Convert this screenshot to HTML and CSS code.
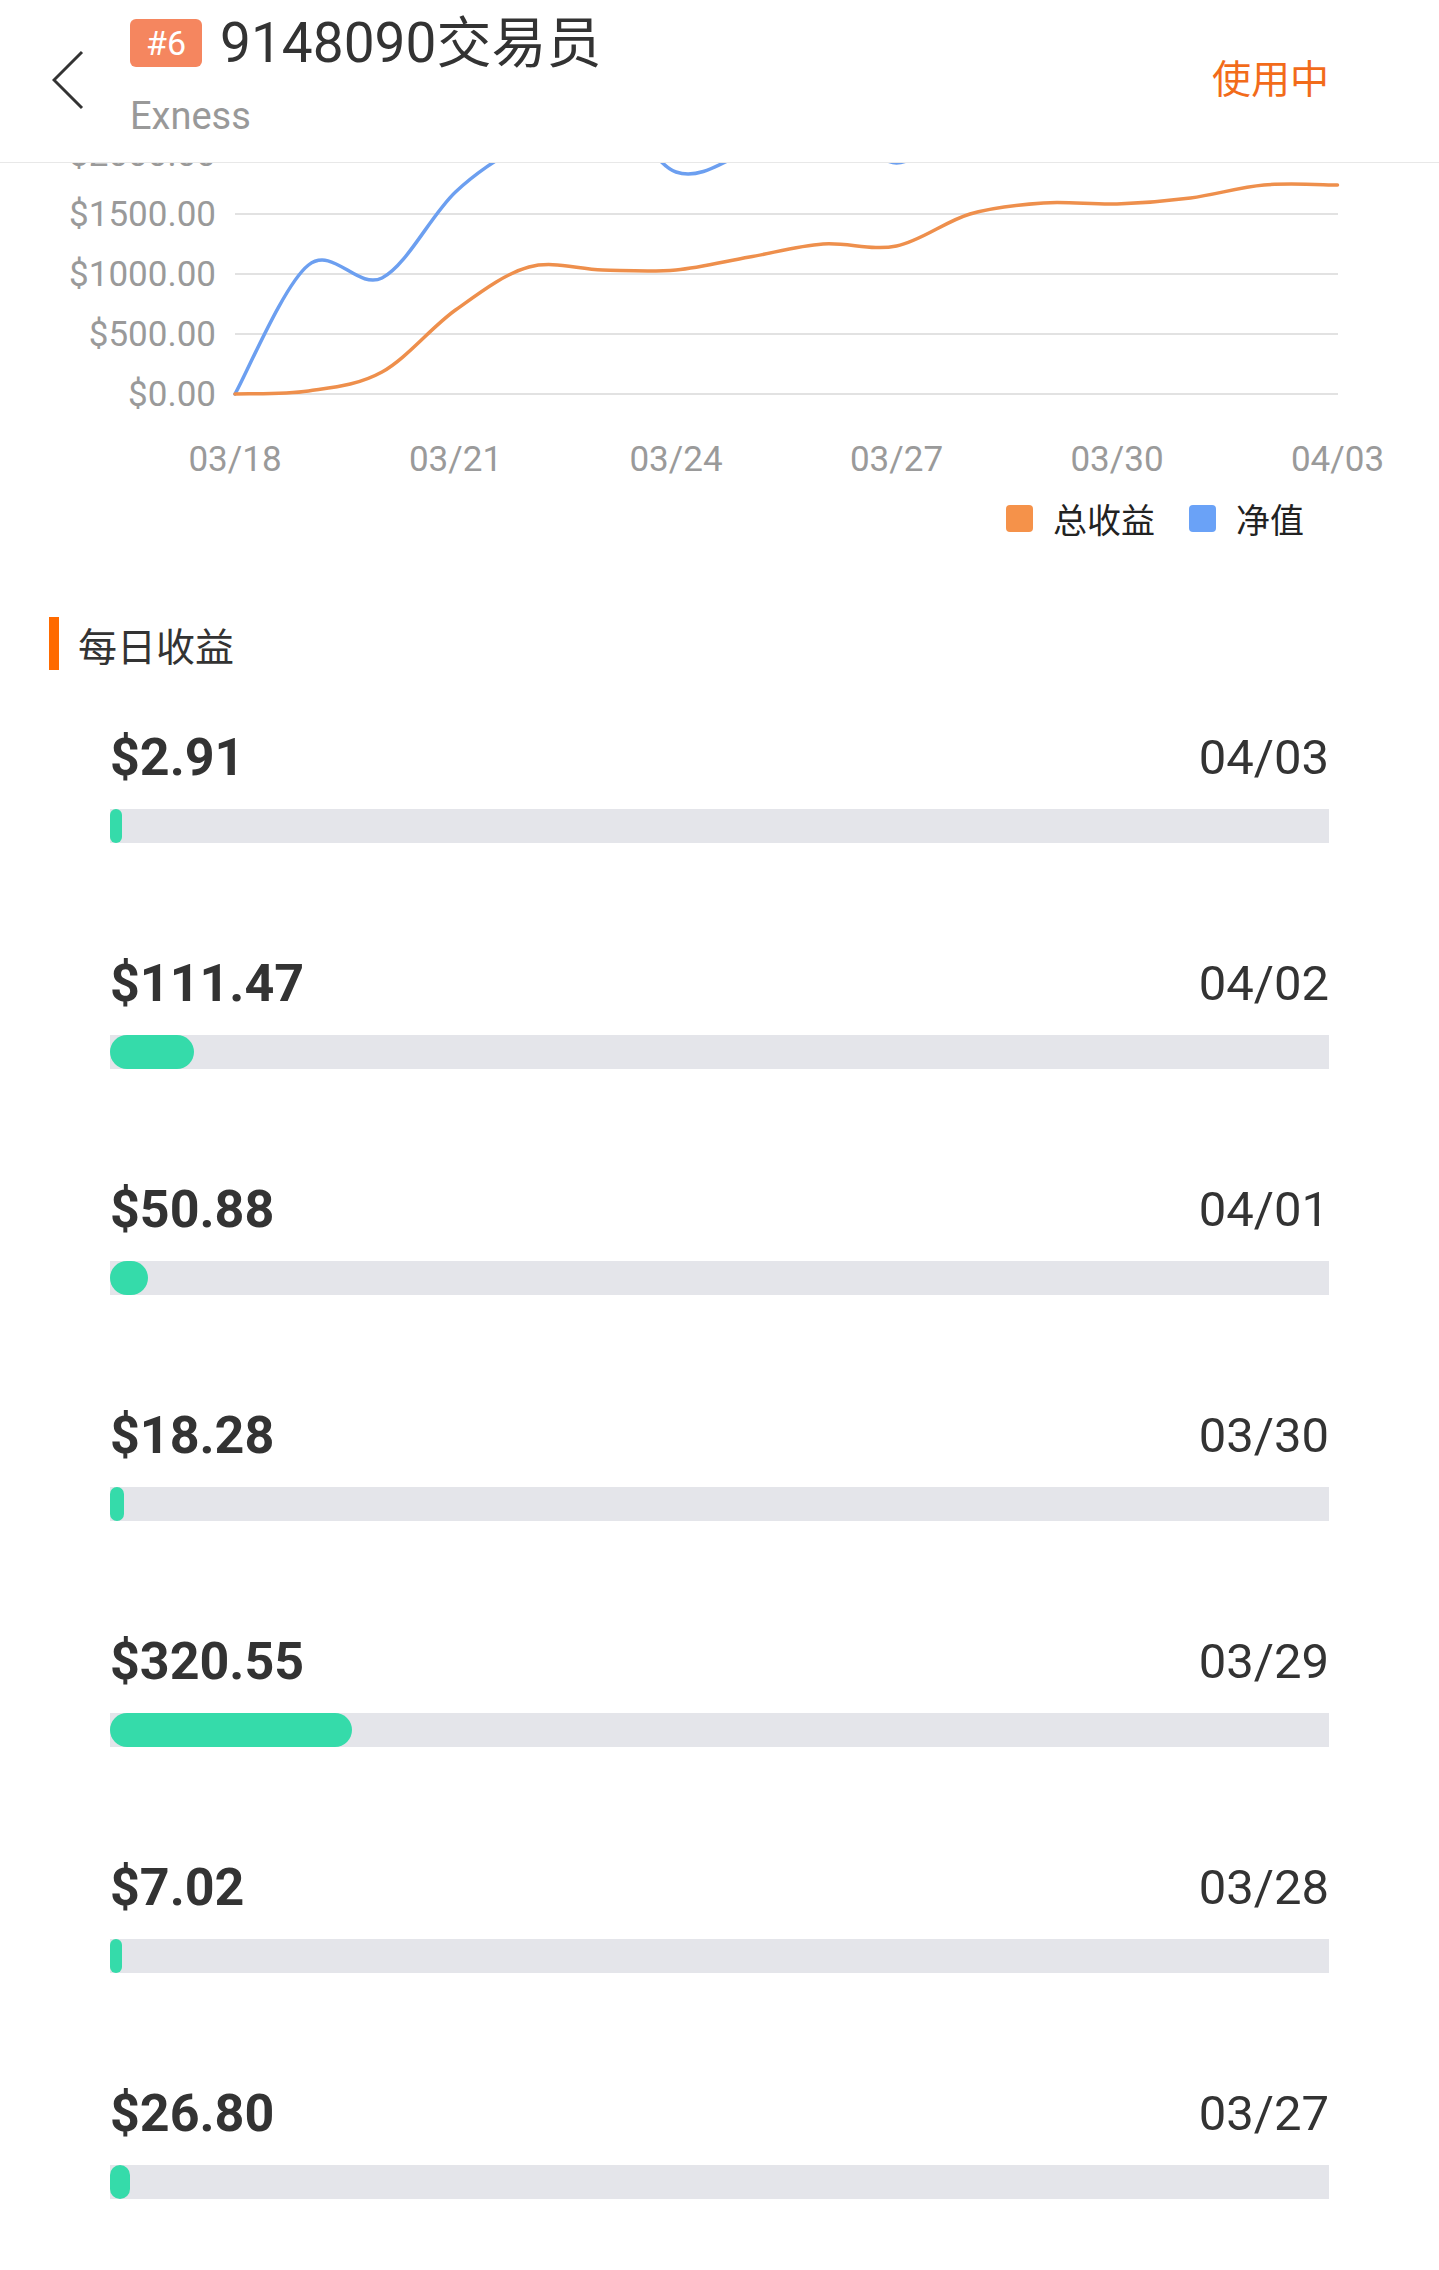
FILE: index.html
```html
<!DOCTYPE html>
<html lang="zh-CN">
<head>
    <meta charset="UTF-8">
    <meta name="viewport" content="width=device-width, initial-scale=1.0">
    <title>9148090交易员</title>
    <link rel="stylesheet" href="styles.css">
</head>
<body>
    <header class="top-bar">
        <a class="back" href="#">
            <svg width="32" height="60" viewBox="0 0 32 60"><polyline points="30,2 2,30 30,58" fill="none" stroke="#333" stroke-width="3"/></svg>
        </a>
        <div class="info">
            <div class="title-row">
                <span class="rank">#6</span>
                <span class="name">9148090交易员</span>
            </div>
            <div class="broker">Exness</div>
        </div>
        <span class="status">使用中</span>
    </header>

    <section class="chart">
        <svg class="chart-svg" width="1439" height="327" viewBox="0 163 1439 327">
            <g class="grid">
                <line x1="235" y1="154" x2="1338" y2="154"/>
                <line x1="235" y1="214" x2="1338" y2="214"/>
                <line x1="235" y1="274" x2="1338" y2="274"/>
                <line x1="235" y1="334" x2="1338" y2="334"/>
                <line x1="235" y1="394" x2="1338" y2="394"/>
            </g>
            <g class="y-labels">
                <text x="216" y="166">$2000.00</text>
                <text x="216" y="226">$1500.00</text>
                <text x="216" y="286">$1000.00</text>
                <text x="216" y="346">$500.00</text>
                <text x="216" y="406">$0.00</text>
            </g>
            <g class="x-labels">
                <text x="235" y="471">03/18</text>
                <text x="455.5" y="471">03/21</text>
                <text x="676" y="471">03/24</text>
                <text x="896.5" y="471">03/27</text>
                <text x="1117" y="471">03/30</text>
                <text x="1337.5" y="471">04/03</text>
            </g>
            <!-- 净值 -->
            <path class="line-blue" d="M235,394 C247.25,372.5 284,284.33 308.5,265 S357.5,290.17 382,278 S431,215 455.5,192 S504.5,155.33 529,140 S578,94.67 602.5,100 S651.5,163.67 676,172 S725,160.33 749.5,150 S798.5,107.83 823,110 S872,163 896.5,163 S945.5,122.17 970,110 S1019,93.33 1043.5,90 S1092.5,90 1117,90 S1166,90 1190.5,90 S1239.5,90 1264,90 S1325.25,90 1337.5,90"/>
            <!-- 总收益 -->
            <path class="line-orange" d="M235,394 C247.25,393.5 284,394.67 308.5,391 S357.5,385.5 382,372 S431,327.5 455.5,310 S504.5,273.67 529,267 S578,269.5 602.5,270 S651.5,272.17 676,270 S725,261.33 749.5,257 S798.5,245.83 823,244 S872,251 896.5,246 S945.5,221.17 970,214 S1019,204.67 1043.5,203 S1092.5,204.83 1117,204 S1166,201.17 1190.5,198 S1239.5,187.17 1264,185 S1325.25,185 1337.5,185"/>
        </svg>
        <div class="legend">
            <span class="legend-item"><i class="swatch orange"></i>总收益</span>
            <span class="legend-item"><i class="swatch blue"></i>净值</span>
        </div>
    </section>

    <section class="daily">
        <h2 class="section-title">每日收益</h2>
        <ul class="day-list">
            <li class="day">
                <div class="day-head"><span class="amount">$2.91</span><span class="date">04/03</span></div>
                <div class="track"><div class="fill" style="width: 0.18%"></div></div>
            </li>
            <li class="day">
                <div class="day-head"><span class="amount">$111.47</span><span class="date">04/02</span></div>
                <div class="track"><div class="fill" style="width: 6.89%"></div></div>
            </li>
            <li class="day">
                <div class="day-head"><span class="amount">$50.88</span><span class="date">04/01</span></div>
                <div class="track"><div class="fill" style="width: 3.15%"></div></div>
            </li>
            <li class="day">
                <div class="day-head"><span class="amount">$18.28</span><span class="date">03/30</span></div>
                <div class="track"><div class="fill" style="width: 1.13%"></div></div>
            </li>
            <li class="day">
                <div class="day-head"><span class="amount">$320.55</span><span class="date">03/29</span></div>
                <div class="track"><div class="fill" style="width: 19.82%"></div></div>
            </li>
            <li class="day">
                <div class="day-head"><span class="amount">$7.02</span><span class="date">03/28</span></div>
                <div class="track"><div class="fill" style="width: 0.43%"></div></div>
            </li>
            <li class="day">
                <div class="day-head"><span class="amount">$26.80</span><span class="date">03/27</span></div>
                <div class="track"><div class="fill" style="width: 1.66%"></div></div>
            </li>
        </ul>
    </section>
</body>
</html>
```

FILE: styles.css
```css
body {
    margin: 0;
    padding: 0;
    background-color: #fff;
    font-family: Roboto, "Noto Sans CJK SC", sans-serif;
    color: #333;
}
.top-bar {
    display: flex;
    align-items: flex-start;
    height: 162px;
    padding: 0 110px 0 52px;
    border-bottom: 1px solid #e8e8e8;
    background: #fff;
}
.back {
    display: block;
    margin-top: 50px;
    width: 32px;
    height: 60px;
}
.back svg {
    display: block;
}
.info {
    margin-left: 46px;
    padding-top: 16px;
    flex: 1;
}
.title-row {
    display: flex;
    align-items: center;
    height: 54px;
}
.rank {
    display: inline-block;
    height: 48px;
    line-height: 48px;
    padding: 0 16px;
    border-radius: 6px;
    background-color: #f5865f;
    color: #fff;
    font-size: 34px;
}
.name {
    margin-left: 18px;
    font-size: 55px;
    line-height: 54px;
    color: #333;
}
.broker {
    margin-top: 24px;
    font-size: 38px;
    line-height: 44px;
    color: #999;
}
.status {
    margin-top: 56px;
    font-size: 39px;
    line-height: 48px;
    color: #f26b1a;
}
.chart-svg {
    display: block;
}
.grid line {
    stroke: #e2e2e2;
    stroke-width: 2;
}
.y-labels text, .x-labels text {
    font-family: Roboto, sans-serif;
    font-size: 35px;
    fill: #9a9a9a;
}
.y-labels text {
    text-anchor: end;
}
.x-labels text {
    text-anchor: middle;
}
.line-blue, .line-orange {
    fill: none;
    stroke-width: 3.5;
    stroke-linecap: round;
    stroke-linejoin: round;
}
.line-blue {
    stroke: #6c9ff0;
}
.line-orange {
    stroke: #ee8f4c;
}
.legend {
    display: flex;
    justify-content: flex-end;
    align-items: center;
    gap: 34px;
    height: 56px;
    padding-right: 135px;
}
.legend-item {
    display: flex;
    align-items: center;
    font-size: 34px;
    color: #222;
}
.swatch {
    display: inline-block;
    width: 27px;
    height: 27px;
    border-radius: 4px;
    margin-right: 20px;
}
.swatch.orange {
    background-color: #f5924a;
}
.swatch.blue {
    background-color: #6aa2f7;
}
.section-title {
    display: flex;
    align-items: center;
    margin: 71px 0 0 49px;
    height: 53px;
    font-size: 39px;
    font-weight: normal;
    color: #333;
}
.section-title::before {
    content: '';
    width: 10px;
    height: 53px;
    margin-right: 19px;
    background-color: #ff6a00;
}
.day-list {
    list-style: none;
    margin: 57px 0 0;
    padding: 0 110px;
}
.day {
    margin-bottom: 110px;
}
.day-head {
    display: flex;
    justify-content: space-between;
    align-items: center;
    height: 60px;
}
.amount {
    font-size: 52px;
    font-weight: bold;
    color: #333;
}
.date {
    font-size: 49px;
    color: #333;
}
.track {
    margin-top: 22px;
    height: 34px;
    background-color: #e4e5ea;
}
.fill {
    height: 100%;
    min-width: 12px;
    border-radius: 17px;
    background-color: #35dbaa;
}
```
